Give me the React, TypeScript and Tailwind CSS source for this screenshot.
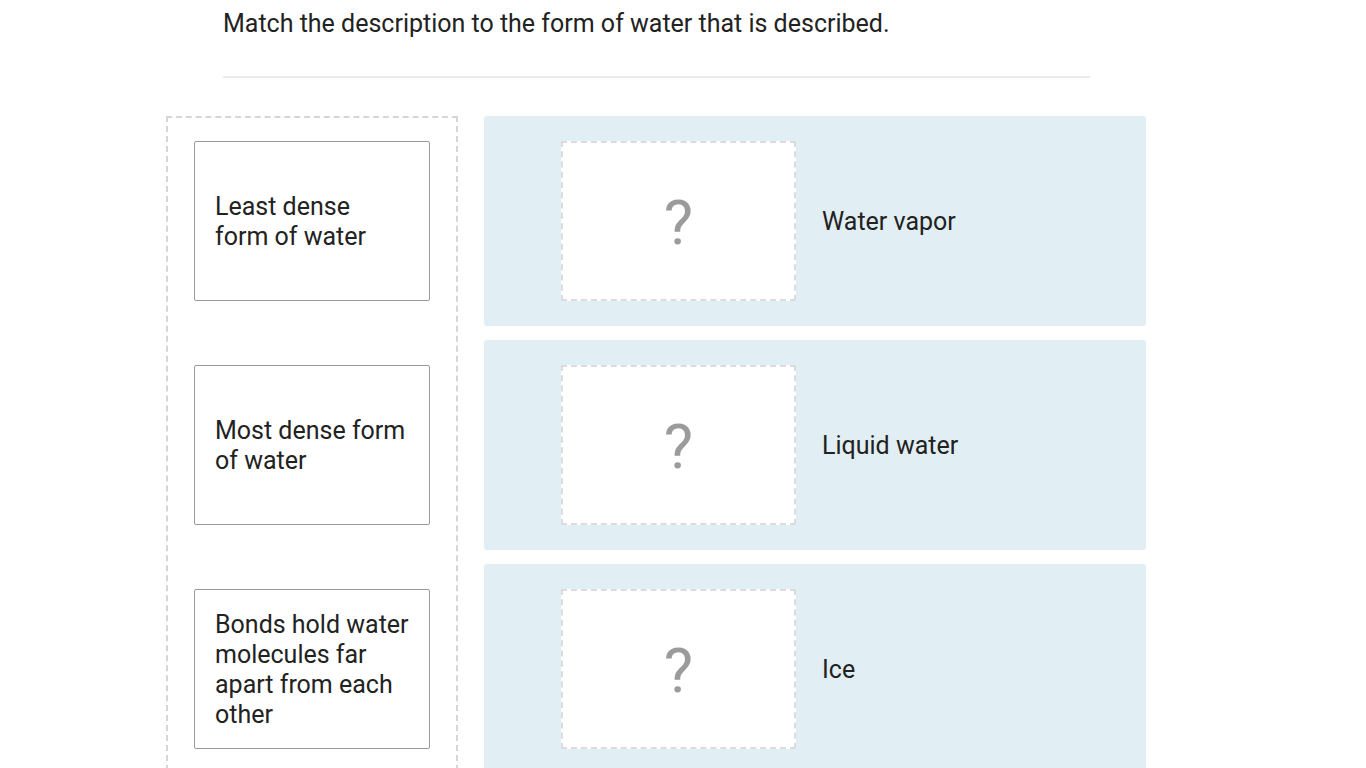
import React from 'react';

const descriptions = [
  ['Least dense', 'form of water'],
  ['Most dense form', 'of water'],
  ['Bonds hold water', 'molecules far', 'apart from each', 'other'],
];

const targets = ['Water vapor', 'Liquid water', 'Ice'];

function DescriptionCard({ lines }: { lines: string[] }) {
  return (
    <div className="flex h-[160px] w-[236px] items-center rounded-[2px] border border-[#9a9a9a] bg-white pt-[2px] pl-[20px]">
      <p className="text-[25px] leading-[30px] whitespace-nowrap text-[#222]">
        {lines.map((l) => (
          <span key={l} className="block">
            {l}
          </span>
        ))}
      </p>
    </div>
  );
}

function TargetRow({ label }: { label: string }) {
  return (
    <div className="flex h-[210px] items-center rounded-[3px] bg-[#e1eef3] pl-[77px]">
      <div className="flex h-[160px] w-[235px] items-center justify-center border-2 border-dashed border-[#dcdcdc] bg-white">
        <span className="pt-[4px] text-[62px] font-normal leading-none text-[#9b9b9b]">?</span>
      </div>
      <span className="ml-[26px] pt-[2px] text-[25px] text-[#222]">{label}</span>
    </div>
  );
}

export default function App() {
  return (
    <div
      className="h-[768px] w-[1366px] overflow-hidden bg-white"
      style={{ fontFamily: 'Roboto, "Liberation Sans", sans-serif' }}
    >
      <div className="pl-[223px] pr-[277px]">
        <h1 className="pt-[7px] text-[25px] leading-[34px] text-[#222]">
          Match the description to the form of water that is described.
        </h1>
        <div className="mt-[35px] h-[2px] w-[867px] bg-[#ebebeb]" />
      </div>

      <div className="mt-[38px] flex pl-[166px]">
        <div className="flex w-[292px] flex-col gap-[64px] border-2 border-dashed border-[#d6d6d6] pl-[26px] pt-[23px] pb-[40px]">
          {descriptions.map((d) => (
            <DescriptionCard key={d[0]} lines={d} />
          ))}
        </div>
        <div className="ml-[26px] flex w-[662px] flex-col gap-[14px]">
          {targets.map((t) => (
            <TargetRow key={t} label={t} />
          ))}
        </div>
      </div>
    </div>
  );
}
